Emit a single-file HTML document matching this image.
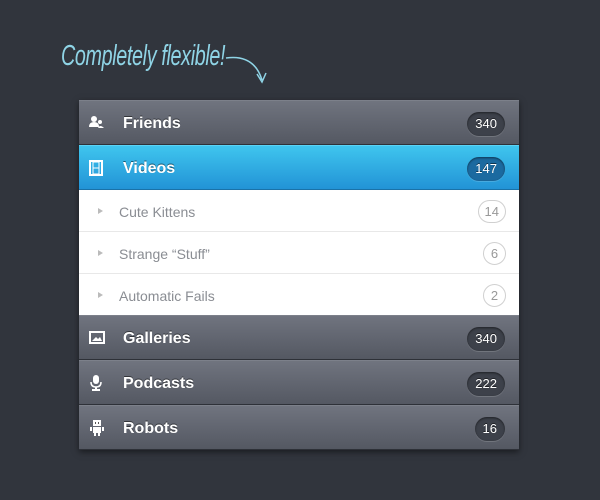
<!DOCTYPE html>
<html><head><meta charset="utf-8"><style>
*{margin:0;padding:0;box-sizing:border-box}
body{width:600px;height:500px;background:#31353d;font-family:"Liberation Sans",sans-serif;position:relative;overflow:hidden}
.title{position:absolute;left:61px;top:40px;color:#8fd4e6;font-size:29px;font-style:italic;font-weight:300;letter-spacing:-0.5px;transform:scaleX(.68);transform-origin:left;white-space:nowrap}
.panel{position:absolute;left:79px;top:100px;width:440px;box-shadow:0 2px 6px rgba(0,0,0,.5)}
.row{height:45px;position:relative;background:linear-gradient(#70747f,#545862);border-top:1px solid #7c808a;border-bottom:1px solid #2e3138;color:#fff;font-weight:bold;font-size:16px;text-shadow:0 -1px 0 rgba(0,0,0,.5)}
.row span.t{position:absolute;left:44px;top:14px}
.row.sel{background:linear-gradient(#3fc5ee,#2293d6);border-top:1px solid #5bd3f5;border-bottom:1px solid #1a72a8}
.badge{position:absolute;right:14px;top:11px;height:24px;line-height:24px;padding:0 8px;border-radius:12px;background:#3d414a;font-size:13px;font-weight:normal;box-shadow:inset 0 1px 2px rgba(0,0,0,.5),0 1px 0 rgba(255,255,255,.15)}
.sel .badge{background:#1b6aa0}
.ic{position:absolute;left:10px;top:14px}
.sub{height:42px;background:#fff;border-bottom:1px solid #e8e8e8;position:relative;color:#8a8d93;font-size:14px}
.sub.l{height:41px;border-bottom:none}
.sub .t{position:absolute;left:40px;top:14px}
.sub .ar{position:absolute;left:19px;top:18px;width:0;height:0;border-left:5px solid #bbb;border-top:3.5px solid transparent;border-bottom:3.5px solid transparent}
.ob{position:absolute right:13px}
.ob{position:absolute;right:13px;top:10px;height:23px;min-width:23px;line-height:21px;text-align:center;padding:0 6px;border-radius:12px;border:1px solid #d0d0d0;font-size:13px;color:#999}
</style></head><body>
<div class="title">Completely flexible!</div>
<svg style="position:absolute;left:224px;top:52px" width="50" height="40"><path d="M2 6 Q30 2 38 28" stroke="#8fd4e6" stroke-width="1.5" fill="none"/><path d="M33 22 L38 30 L42 21" stroke="#8fd4e6" stroke-width="1.5" fill="none"/></svg>
<div class="panel">
<div class="row"><svg class="ic" width="16" height="14"><circle cx="5" cy="4" r="3" fill="#fff"/><path d="M0 12 Q0 7 5 7 Q10 7 10 12Z" fill="#fff"/><circle cx="11" cy="7" r="2" fill="#fff"/><path d="M9 13 Q11 9 15 13Z" fill="#fff"/></svg><span class="t">Friends</span><span class="badge">340</span></div>
<div class="row sel"><svg class="ic" width="14" height="16"><rect x="1" y="1" width="12" height="14" fill="none" stroke="#fff" stroke-width="2"/><rect x="4" y="2" width="6" height="12" fill="none" stroke="#fff" stroke-width="1"/><line x1="4" y1="8" x2="10" y2="8" stroke="#fff"/></svg><span class="t">Videos</span><span class="badge">147</span></div>
<div class="sub"><span class="ar"></span><span class="t">Cute Kittens</span><span class="ob">14</span></div>
<div class="sub"><span class="ar"></span><span class="t">Strange “Stuff”</span><span class="ob">6</span></div>
<div class="sub l"><span class="ar"></span><span class="t">Automatic Fails</span><span class="ob">2</span></div>
<div class="row"><svg class="ic" width="16" height="14" style="top:15px"><rect x="1" y="1" width="14" height="11" fill="none" stroke="#fff" stroke-width="2"/><path d="M3 10 L7 6 L9 8 L11 6 L13 10Z" fill="#fff"/></svg><span class="t">Galleries</span><span class="badge">340</span></div>
<div class="row"><svg class="ic" width="14" height="16"><rect x="4" y="0" width="6" height="9" rx="3" fill="#fff"/><path d="M2 7 Q2 12 7 12 Q12 12 12 7" stroke="#fff" fill="none" stroke-width="1.5"/><rect x="6" y="12" width="2" height="3" fill="#fff"/><rect x="3" y="14" width="8" height="2" fill="#fff"/></svg><span class="t">Podcasts</span><span class="badge">222</span></div>
<div class="row"><svg class="ic" width="16" height="16"><rect x="4" y="0" width="8" height="6" fill="#fff"/><rect x="6" y="2" width="1" height="2" fill="#555"/><rect x="9" y="2" width="1" height="2" fill="#555"/><rect x="4" y="7" width="8" height="6" fill="#fff"/><rect x="1" y="7" width="2" height="4" fill="#fff"/><rect x="13" y="7" width="2" height="4" fill="#fff"/><rect x="5" y="13" width="2" height="3" fill="#fff"/><rect x="9" y="13" width="2" height="3" fill="#fff"/></svg><span class="t">Robots</span><span class="badge">16</span></div>
</div>
</body></html>
